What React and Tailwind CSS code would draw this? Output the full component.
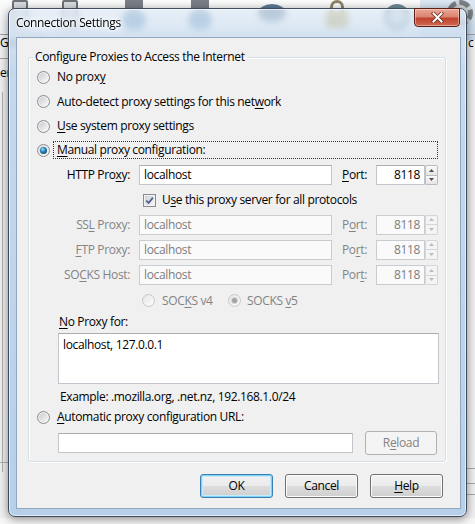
import React from "react";

function U({ children }) {
  return <span className="underline underline-offset-[2px] decoration-1">{children}</span>;
}

function Radio({ checked = false, disabled = false }) {
  return (
    <span
      className={
        disabled
          ? "flex items-center justify-center w-[13px] h-[13px] shrink-0 rounded-full border border-[#c8c8c8] bg-[linear-gradient(135deg,#e6e6e6,#fbfbfb)]"
          : "flex items-center justify-center w-[13px] h-[13px] shrink-0 rounded-full border border-[#8a8c8f] bg-[linear-gradient(135deg,#c4c6ca,#fdfdfd)] shadow-[inset_0_0_0_1px_#f3f3f3]"
      }
    >
      {checked && disabled && <span className="w-[5px] h-[5px] rounded-full bg-[#a3a3a3] shadow-[0_0_0_1px_#d6d6d6]" />}
      {checked && !disabled && (
        <span className="w-[7px] h-[7px] rounded-full bg-[radial-gradient(circle_at_40%_35%,#a8e6ff_0%,#2b8cc4_35%,#0c3a5c_85%)]" />
      )}
    </span>
  );
}

function Checkbox() {
  return (
    <span className="flex items-center justify-center w-[13px] h-[13px] shrink-0 border border-[#8a8c8f] bg-[linear-gradient(135deg,#cacdd1,#fbfbfb)] shadow-[inset_0_0_0_1px_#f3f3f3]">
      <svg width="9" height="9" viewBox="0 0 9 9">
        <path d="M1.2 4.6 L3.6 7 L7.9 1.6" fill="none" stroke="#4b5f92" strokeWidth="1.8" />
      </svg>
    </span>
  );
}

function TextBox({ value, disabled = false, width, right = false }) {
  const base = disabled
    ? "h-[20px] flex items-center px-[4px] border border-[#c9ccd0] bg-[#fafafa] text-[#7d7d7d]"
    : "h-[20px] flex items-center px-[4px] border border-[#c2c6cc] border-t-[#abadb3] bg-white text-black";
  return (
    <div className={base + (right ? " justify-end" : "")} style={{ width }}>
      {value}
    </div>
  );
}

function Spinner({ disabled = false }) {
  const arrow = disabled ? "#bdbdbd" : "#505050";
  const part = disabled
    ? "flex-1 flex items-center justify-center border border-[#d3d5d8] bg-[#f4f4f4]"
    : "flex-1 flex items-center justify-center border border-[#b9bdc2] bg-[linear-gradient(#fafafa,#e6e6e6)]";
  return (
    <div className="flex flex-col w-[13px] h-[20px]">
      <div className={part + " rounded-t-[2px]"}>
        <svg width="5" height="3" viewBox="0 0 5 3">
          <path d="M0 3 L2.5 0 L5 3Z" fill={arrow} />
        </svg>
      </div>
      <div className={part + " rounded-b-[2px] border-t-0"}>
        <svg width="5" height="3" viewBox="0 0 5 3">
          <path d="M0 0 L2.5 3 L5 0Z" fill={arrow} />
        </svg>
      </div>
    </div>
  );
}

function ProxyRow({ label, port, disabled, h }) {
  return (
    <div className={"flex items-center " + h}>
      <div className={disabled ? "w-[101px] text-right text-[#838383]" : "w-[101px] text-right"}>{label}</div>
      <div className="ml-[9px]">
        <TextBox value="localhost" disabled={disabled} width={193} />
      </div>
      <div className={disabled ? "ml-[10px] w-[34px] text-[#838383]" : "ml-[10px] w-[34px]"}>{port}</div>
      <TextBox value="8118" disabled={disabled} width={49} right />
      <Spinner disabled={disabled} />
    </div>
  );
}

function Button({ children, primary = false, disabled = false, w = "w-[73px]" }) {
  let cls;
  if (disabled) {
    cls = "h-[24px] rounded-[3px] border border-[#adb2b5] bg-[#f4f4f4] text-[#838383] flex items-center justify-center";
  } else if (primary) {
    cls =
      "h-[24px] rounded-[3px] border border-[#3c7fb1] bg-[linear-gradient(#f2f2f2_0%,#ebebeb_50%,#dddddd_50%,#cfcfcf_100%)] shadow-[inset_0_0_0_1px_#7fd3f7,inset_0_0_0_2px_#c6ecfb] flex items-center justify-center";
  } else {
    cls =
      "h-[24px] rounded-[3px] border border-[#707070] bg-[linear-gradient(#f2f2f2_0%,#ebebeb_50%,#dddddd_50%,#cfcfcf_100%)] shadow-[inset_0_0_0_1px_#fcfcfc] flex items-center justify-center";
  }
  return <div className={cls + " " + w}>{children}</div>;
}

function ToolIcon({ x, kind }) {
  return (
    <div className="absolute top-[0px]" style={{ left: x }}>
      {kind === "box" && <div className="w-[16px] h-[28px] rounded-[2px] border-2 border-[#6d7276] bg-[#d9dcdf]" />}
      {kind === "globe" && (
        <div className="flex flex-col items-center">
          <div className="w-[18px] h-[8px] bg-[#7a7f86]" />
          <div className="mt-[2px] w-[24px] h-[20px] rounded-full bg-[#5d8fb6]" />
        </div>
      )}
      {kind === "lock" && (
        <div className="flex flex-col items-center">
          <div className="w-[14px] h-[12px] rounded-t-full border-[3px] border-b-0 border-[#8c8466]" />
          <div className="w-[22px] h-[16px] rounded-[2px] bg-[#b59c4b]" />
        </div>
      )}
      {kind === "circle" && <div className="mt-[4px] w-[26px] h-[26px] rounded-full border-4 border-[#6f8a99] bg-[#c7d3da]" />}
      {kind === "gear" && <div className="w-[26px] h-[26px] rounded-full border-[5px] border-dashed border-[#7a7f84] bg-[#cfd3d6]" />}
      {kind === "mask" && <div className="mt-[4px] w-[28px] h-[18px] rounded-[50%] bg-[#5b7a96]" />}
    </div>
  );
}

export default function App() {
  return (
    <div className="relative w-[475px] h-[524px] overflow-hidden bg-[#f0f0f0] font-['Open_Sans',sans-serif] text-[12px] leading-[16px] text-black tracking-[-0.35px]">
      {/* desktop / options window behind */}
      <div className="absolute inset-0">
        <div className="absolute left-0 top-0 w-[475px] h-[40px] bg-[linear-gradient(#fbfbfb,#eceff2)]" />
        <div className="absolute left-[420px] top-0 w-[55px] h-[40px] bg-[linear-gradient(#dce7f3,#c9daec)]" />
        <ToolIcon x={12} kind="box" />
        <ToolIcon x={62} kind="box" />
        <ToolIcon x={122} kind="globe" />
        <ToolIcon x={188} kind="globe" />
        <ToolIcon x={258} kind="mask" />
        <ToolIcon x={326} kind="lock" />
        <ToolIcon x={384} kind="circle" />
        <ToolIcon x={447} kind="gear" />
        <div className="absolute left-0 top-[34px] w-[475px] h-px bg-[#a0a0a0]" />
        <div className="absolute left-0 top-[36px] text-[12px] leading-[14px]">General</div>
        <div className="absolute left-0 top-[58px] w-[20px] h-px bg-[#a0a0a0]" />
        <div className="absolute left-0 top-[66px] text-[12px] leading-[14px]">er</div>
        <div className="absolute left-[2px] top-[92px] w-px h-[380px] bg-[#b0b0b0]" />
        <div className="absolute left-0 top-[462px] w-[20px] h-px bg-[#b0b0b0]" />
        <div className="absolute left-[468px] top-[36px] text-[12px] leading-[14px]">c</div>
        <div className="absolute left-[460px] top-[468px] w-[20px] h-px bg-[#a8a8a8]" />
        <div className="absolute left-[460px] top-[483px] w-[20px] h-px bg-[#a8a8a8]" />
        <div className="absolute left-[460px] top-[494px] w-[20px] h-px bg-[#a8a8a8]" />
        <div className="absolute left-0 top-[518px] w-[475px] h-[6px] bg-[#f7f7f7]" />
      </div>

      {/* the dialog window */}
      <div className="absolute left-[8px] top-[8px] w-[459px] h-[509px] rounded-[7px] border border-[#3d4c5e] bg-[linear-gradient(180deg,rgba(225,236,247,0.72)_0%,rgba(190,212,236,0.85)_12%,rgba(178,204,232,0.92)_100%)] backdrop-blur-[3px] shadow-[0_2px_10px_rgba(0,0,0,0.45),inset_0_0_0_1px_rgba(255,255,255,0.6)] flex flex-col">
        {/* title bar */}
        <div className="h-[28px] flex items-start shrink-0">
          <div className="flex-1 pl-[7px] pt-[6px] [text-shadow:0_0_6px_#fff,0_0_3px_#fff,0_0_10px_#fff]">Connection Settings</div>
          <div className="-mt-px mr-[6px] w-[46px] h-[19px] rounded-b-[4px] border border-[#5a1e14] bg-[linear-gradient(#eba796_0%,#d98570_45%,#c2432e_55%,#cf6a52_100%)] shadow-[inset_0_0_0_1px_rgba(255,230,220,0.45)] flex items-center justify-center">
            <svg width="13" height="11" viewBox="0 0 13 11">
              <path d="M2.5 1.5 L10.5 9.5 M10.5 1.5 L2.5 9.5" stroke="#6b2a1f" strokeWidth="3.6" strokeLinecap="square" />
              <path d="M2.5 1.5 L10.5 9.5 M10.5 1.5 L2.5 9.5" stroke="#ffffff" strokeWidth="2" strokeLinecap="square" />
            </svg>
          </div>
        </div>

        {/* client area */}
        <div className="ml-[7px] w-[445px] h-[472px] bg-[#f0f0f0] border border-[#92a7c0] flex flex-col">
          <fieldset className="ml-[11px] mt-[11px] w-[418px] border border-[#d5dfe5] rounded-[3px] pb-[4px] shadow-[inset_1px_1px_0_#fff,1px_1px_0_#fff]">
            <legend className="ml-[4px] px-[2px] leading-[16px]">Configure Proxies to Access the Internet</legend>

            <div className="flex items-center h-[24px] pl-[8px] gap-[7px]">
              <Radio />
              <span>No prox<U>y</U></span>
            </div>
            <div className="flex items-center h-[25px] pl-[8px] gap-[7px]">
              <Radio />
              <span>Auto-detect proxy settings for this net<U>w</U>ork</span>
            </div>
            <div className="flex items-center h-[24px] pl-[8px] gap-[7px]">
              <Radio />
              <span><U>U</U>se system proxy settings</span>
            </div>
            <div className="flex items-center h-[24px] pl-[8px]">
              <Radio checked />
              <div className="ml-[3px] w-[385px] h-[18px] border border-dotted border-[#333] pl-[3px] flex items-center">
                <span><U>M</U>anual proxy configuration:</span>
              </div>
            </div>

            <ProxyRow h="h-[26px]" label={<>HTTP Pro<U>x</U>y:</>} port={<><U>P</U>ort:</>} />

            <div className="flex items-center h-[24px] pl-[114px] gap-[6px]">
              <Checkbox />
              <span>U<U>s</U>e this proxy server for all protocols</span>
            </div>

            <ProxyRow h="h-[25px]" disabled label={<>SS<U>L</U> Proxy:</>} port={<>P<U>o</U>rt:</>} />
            <ProxyRow h="h-[25px]" disabled label={<><U>F</U>TP Proxy:</>} port={<>Po<U>r</U>t:</>} />
            <ProxyRow h="h-[26px]" disabled label={<>SO<U>C</U>KS Host:</>} port={<>Por<U>t</U>:</>} />

            <div className="flex items-center h-[25px] pl-[113px] text-[#838383]">
              <div className="w-[86px] flex items-center gap-[7px]">
                <Radio disabled />
                <span>SOC<U>K</U>S v4</span>
              </div>
              <div className="flex items-center gap-[6px]">
                <Radio disabled checked />
                <span>SOCKS <U>v</U>5</span>
              </div>
            </div>

            <div className="flex items-center h-[18px] pl-[30px]">
              <span><U>N</U>o Proxy for:</span>
            </div>
            <div className="ml-[29px] mt-[2px] w-[381px] h-[51px] border border-[#c2c6cc] border-t-[#abadb3] bg-white px-[4px] pt-[3px]">
              localhost, 127.0.0.1
            </div>
            <div className="flex items-center h-[25px] pl-[31px]">
              <span>Example: .mozilla.org, .net.nz, 192.168.1.0/24</span>
            </div>

            <div className="flex items-center h-[16px] pl-[8px] gap-[7px]">
              <Radio />
              <span><U>A</U>utomatic proxy configuration URL:</span>
            </div>
            <div className="flex items-center h-[28px] mt-[4px] pl-[29px] gap-[12px]">
              <TextBox value="" width={295} />
              <Button disabled w="w-[72px]">R<U>e</U>load</Button>
            </div>
          </fieldset>

          <div className="flex justify-end gap-[12px] pr-[17px] mt-[12px]">
            <Button primary>OK</Button>
            <Button>Cancel</Button>
            <Button><U>H</U>elp</Button>
          </div>
        </div>
      </div>
    </div>
  );
}
